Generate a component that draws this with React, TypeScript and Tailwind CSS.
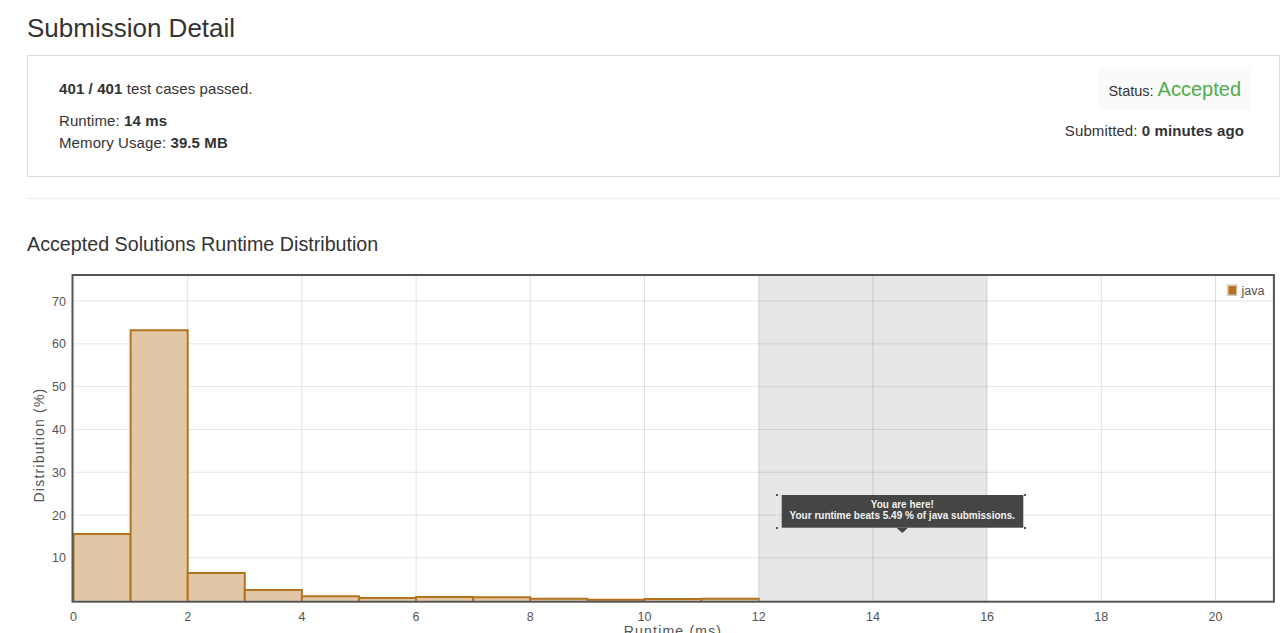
import React from "react";

// plot geometry, in page pixels
const X0 = 73.5;
const XS = 57.1;
const Y0 = 600.7;
const YS = 4.281;
const RIGHT = 1272.7;
const TOP = 276;

const BARS = [15.6, 63.2, 6.47, 2.5, 1.03, 0.63, 0.86, 0.8, 0.47, 0.23, 0.4, 0.47];
const X_TICKS = [0, 2, 4, 6, 8, 10, 12, 14, 16, 18, 20];
const Y_TICKS = [10, 20, 30, 40, 50, 60, 70];

function RuntimeChart() {
  return (
    <svg
      width={1256}
      height={371}
      viewBox="27 262 1256 371"
      className="block font-['Liberation_Sans',Arial,sans-serif]"
    >
      {/* your-range band */}
      <rect x={X0 + 12 * XS} y={TOP} width={4 * XS} height={Y0 - TOP} fill="#e6e6e6" />

      {/* grid */}
      {X_TICKS.slice(1).map((t) => (
        <line
          key={`v${t}`}
          x1={X0 + t * XS}
          x2={X0 + t * XS}
          y1={TOP}
          y2={Y0}
          stroke="rgba(0,0,0,0.12)"
          strokeWidth={1}
        />
      ))}
      {Y_TICKS.map((t) => (
        <line
          key={`h${t}`}
          x1={X0}
          x2={RIGHT}
          y1={Y0 - t * YS}
          y2={Y0 - t * YS}
          stroke="rgba(0,0,0,0.1)"
          strokeWidth={1}
        />
      ))}

      {/* bars */}
      {BARS.map((v, i) => {
        const x = X0 + i * XS;
        const y = Y0 - v * YS;
        return (
          <g key={i}>
            <rect x={x} y={y} width={XS} height={Y0 - y} fill="#e1c7a5" />
            <path
              d={`M${x} ${Y0} V${y} H${x + XS} V${Y0}`}
              fill="none"
              stroke="#b5731f"
              strokeWidth={2}
            />
          </g>
        );
      })}

      {/* frame */}
      <rect x={72.5} y={275} width={1201.4} height={326.7} fill="none" stroke="#545454" strokeWidth={2} />

      {/* y labels */}
      {Y_TICKS.map((t) => (
        <text key={`yl${t}`} x={66} y={Y0 - t * YS + 4.5} textAnchor="end" fontSize={12.5} fill="#545454">
          {t}
        </text>
      ))}
      {/* x labels */}
      {X_TICKS.map((t) => (
        <text key={`xl${t}`} x={X0 + t * XS} y={620.5} textAnchor="middle" fontSize={12.5} fill="#545454">
          {t}
        </text>
      ))}

      <text
        transform="translate(44 445) rotate(-90)"
        textAnchor="middle"
        fontSize={14}
        letterSpacing={1.2}
        fill="#545454"
      >
        Distribution (%)
      </text>
      <text x={673} y={636} textAnchor="middle" fontSize={14} letterSpacing={1.2} fill="#545454">
        Runtime (ms)
      </text>

      {/* legend */}
      <rect x={1227.2} y={284.8} width={9.6} height={10.7} fill="#fff" stroke="#ccc" strokeWidth={1} />
      <rect x={1228.3} y={285.7} width={8} height={9} fill="#b5731f" />
      <text x={1241.5} y={294.5} fontSize={12.5} fill="#545454">
        java
      </text>

      {/* tooltip */}
      <line x1={777} x2={777} y1={495} y2={528} stroke="#eeeeee" strokeWidth={1} />
      <rect x={776} y={494} width={2} height={2} fill="#555" />
      <rect x={1024} y={494} width={2} height={2} fill="#555" />
      <rect x={776} y={527} width={2} height={2} fill="#555" />
      <rect x={1024} y={527} width={2} height={2} fill="#555" />
      <rect x={781.7} y={495} width={241.6} height={32.7} fill="#454545" />
      <polygon points="896.5,527.7 908,527.7 902.3,533" fill="#454545" />
      <text x={902.3} y={508.3} textAnchor="middle" fontSize={10} fontWeight={700} fill="#f2f2f2">
        You are here!
      </text>
      <text x={902.3} y={518.6} textAnchor="middle" fontSize={10} fontWeight={700} fill="#f2f2f2">
        Your runtime beats 5.49 % of java submissions.
      </text>
    </svg>
  );
}

export default function App() {
  return (
    <div className="w-[1283px] h-[633px] overflow-hidden bg-white text-[#333] font-['Liberation_Sans',Arial,sans-serif]">
      <div className="pl-[27px]">
        {/* ── HEADER ── */}
        <h1 className="mt-[14px] text-[26px] leading-[1.1] font-normal">Submission Detail</h1>

        {/* ── RESULT PANEL ── */}
        <div className="mt-[12px] w-[1253px] h-[122px] border border-[#ddd] flex justify-between pl-[31px] pr-[29px]">
          <div className="pt-[23px] text-[15px] tracking-[0.1px]">
            <p className="leading-5">
              <b>401 / 401</b> test cases passed.
            </p>
            <div className="mt-[11px] leading-[22px]">
              <p>
                Runtime: <b>14 ms</b>
              </p>
              <p>
                Memory Usage: <b>39.5 MB</b>
              </p>
            </div>
          </div>

          <div className="pt-[12px] flex flex-col items-end">
            <div className="h-[42px] px-[9px] flex items-center bg-[#fafafa]">
              <p className="leading-normal mt-[1px]">
                <span className="text-[14.5px]">Status: </span>
                <span className="text-[20px] text-[#4cae4c]">Accepted</span>
              </p>
            </div>
            <p className="mt-[11px] pr-[6px] text-[15px] tracking-[0.1px] leading-5">
              Submitted: <b>0 minutes ago</b>
            </p>
          </div>
        </div>

        <div className="mt-[21px] w-[1253px] border-t border-[#eee]" />

        {/* ── DISTRIBUTION ── */}
        <h3 className="mt-[35px] text-[19.7px] leading-[1.1] font-normal">
          Accepted Solutions Runtime Distribution
        </h3>
        <div className="mt-[7px]">
          <RuntimeChart />
        </div>
      </div>
    </div>
  );
}
